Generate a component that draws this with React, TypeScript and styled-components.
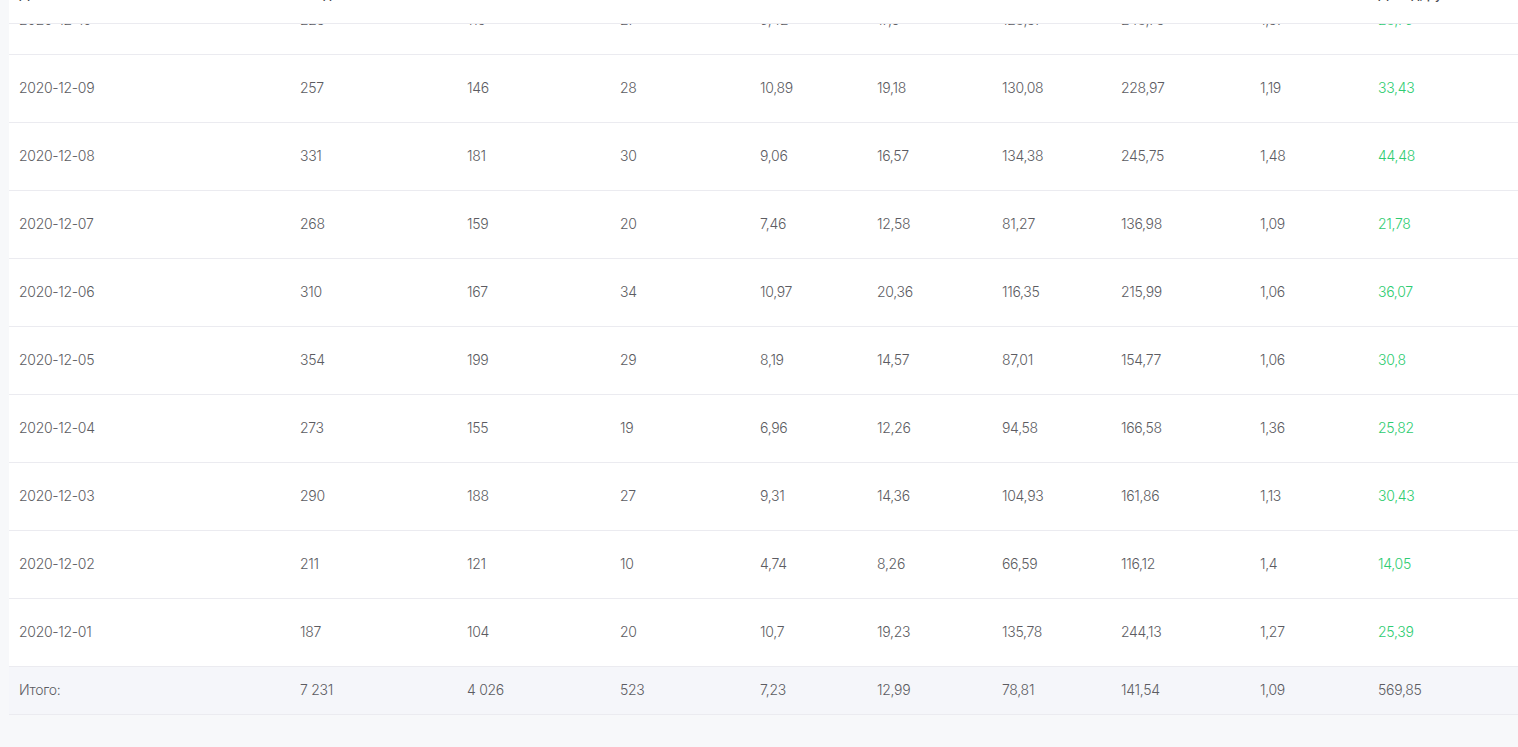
import React from 'react';
import styled, { createGlobalStyle } from 'styled-components';

const GlobalStyle = createGlobalStyle`
  body {
    margin: 0;
    background: #f7f8fa;
    font-family: 'Inter', 'Open Sans', sans-serif;
    font-weight: 300;
    color: #5c5c62;
  }
`;

const COLUMNS = '281px 167px 153px 140px 117px 125px 119px 139px 118px 1fr';

const Page = styled.div`
  box-sizing: border-box;
  height: 100vh;
  padding: 0 0 32px 9px;
  display: flex;
  flex-direction: column;
  overflow: hidden;
`;

const Table = styled.div`
  flex: 1;
  min-height: 0;
  display: flex;
  flex-direction: column;
  background: #ffffff;
`;

/* the header is scrolled mostly out of view: only its lower part shows */
const HeaderClip = styled.div`
  flex: none;
  height: 23px;
  display: flex;
  align-items: flex-end;
  overflow: hidden;
  border-bottom: 1px solid #ebebf0;
`;

const HeaderRow = styled.div`
  flex: none;
  width: 100%;
  height: 58px;
  display: grid;
  grid-template-columns: ${COLUMNS};
  align-items: center;
  font-size: 13px;
  font-weight: 500;
  color: #4a4a50;
`;

const Body = styled.div`
  flex: 1;
  min-height: 0;
  display: flex;
  flex-direction: column;
  justify-content: flex-end;
  overflow: hidden;
`;

const Row = styled.div<{ $total?: boolean }>`
  flex: none;
  box-sizing: border-box;
  display: grid;
  grid-template-columns: ${COLUMNS};
  align-items: center;
  height: ${(p) => (p.$total ? '49px' : '68px')};
  padding-bottom: 2px;
  border-top: 1px solid #ebebf0;
  border-bottom: ${(p) => (p.$total ? '1px solid #ebebf0' : 'none')};
  background: ${(p) => (p.$total ? '#f5f6fa' : '#ffffff')};
  font-size: 14px;
  letter-spacing: -0.3px;
`;

const Cell = styled.div<{ $profit?: boolean }>`
  padding-left: 10px;
  color: ${(p) => (p.$profit ? '#2ecc71' : 'inherit')};
  white-space: nowrap;
`;

const headers = [
  'Дата',
  'Входы',
  'Уникальные',
  'Заявки',
  'CR',
  'CTR',
  'EPC',
  'EPL',
  'ROI',
  'Доход, руб',
];

const rows: string[][] = [
  ['2020-12-14', '241', '139', '22', '9,13', '15,83', '101,45', '176,12', '1,11', '27,64'],
  ['2020-12-13', '262', '150', '25', '9,54', '16,67', '110,21', '192,50', '1,21', '30,12'],
  ['2020-12-12', '236', '128', '19', '8,05', '14,84', '92,37', '170,31', '1,02', '23,01'],
  ['2020-12-11', '249', '136', '24', '9,64', '17,65', '118,46', '216,89', '1,14', '29,47'],
  ['2020-12-10', '223', '115', '27', '9,42', '17,6', '128,37', '248,73', '1,37', '28,79'],
  ['2020-12-09', '257', '146', '28', '10,89', '19,18', '130,08', '228,97', '1,19', '33,43'],
  ['2020-12-08', '331', '181', '30', '9,06', '16,57', '134,38', '245,75', '1,48', '44,48'],
  ['2020-12-07', '268', '159', '20', '7,46', '12,58', '81,27', '136,98', '1,09', '21,78'],
  ['2020-12-06', '310', '167', '34', '10,97', '20,36', '116,35', '215,99', '1,06', '36,07'],
  ['2020-12-05', '354', '199', '29', '8,19', '14,57', '87,01', '154,77', '1,06', '30,8'],
  ['2020-12-04', '273', '155', '19', '6,96', '12,26', '94,58', '166,58', '1,36', '25,82'],
  ['2020-12-03', '290', '188', '27', '9,31', '14,36', '104,93', '161,86', '1,13', '30,43'],
  ['2020-12-02', '211', '121', '10', '4,74', '8,26', '66,59', '116,12', '1,4', '14,05'],
  ['2020-12-01', '187', '104', '20', '10,7', '19,23', '135,78', '244,13', '1,27', '25,39'],
];

const total = ['Итого:', '7 231', '4 026', '523', '7,23', '12,99', '78,81', '141,54', '1,09', '569,85'];

const App = () => (
  <>
    <GlobalStyle />
    <Page>
      <Table>
        <HeaderClip>
          <HeaderRow>
            {headers.map((h) => (
              <Cell key={h}>{h}</Cell>
            ))}
          </HeaderRow>
        </HeaderClip>
        <Body>
          {rows.map((r) => (
            <Row key={r[0]}>
              {r.map((v, i) => (
                <Cell key={i} $profit={i === r.length - 1}>
                  {v}
                </Cell>
              ))}
            </Row>
          ))}
        </Body>
        <Row $total>
          {total.map((v, i) => (
            <Cell key={i}>{v}</Cell>
          ))}
        </Row>
      </Table>
    </Page>
  </>
);

export default App;
